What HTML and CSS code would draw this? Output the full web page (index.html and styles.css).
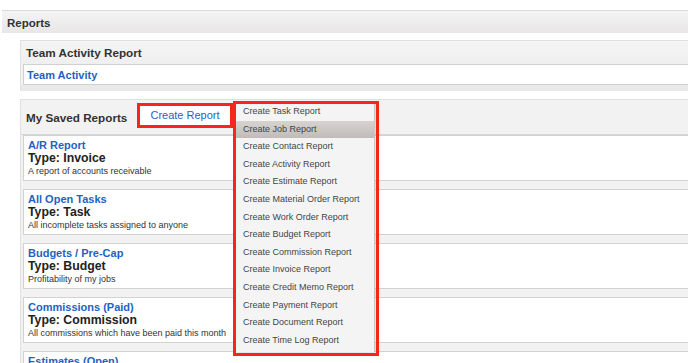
FILE: index.html
```html
<html>

  <head>

    <title>
      Reports
    </title>

    <link rel="stylesheet" href="styles.css">

  </head>

  <body>

    <div class = "page">

      <div class = "topbar">Reports</div>

      <div class = "panel">
        <div class = "panelHead">Team Activity Report</div>
        <div class = "panelBody">
          <a class = "reportLink" href = "#">Team Activity</a>
        </div>
        <div class = "panelFoot"></div>
      </div>

      <div class = "panel saved">

        <div class = "savedHead">
          <span class = "savedTitle">My Saved Reports</span>
          <a class = "createButton" href = "#">Create Report</a>
        </div>

        <div class = "card">
          <a class = "reportLink" href = "#">A/R Report</a>
          <div class = "reportType">Type: Invoice</div>
          <div class = "reportDesc">A report of accounts receivable</div>
        </div>

        <div class = "card">
          <a class = "reportLink" href = "#">All Open Tasks</a>
          <div class = "reportType">Type: Task</div>
          <div class = "reportDesc">All incomplete tasks assigned to anyone</div>
        </div>

        <div class = "card">
          <a class = "reportLink" href = "#">Budgets / Pre-Cap</a>
          <div class = "reportType">Type: Budget</div>
          <div class = "reportDesc">Profitability of my jobs</div>
        </div>

        <div class = "card">
          <a class = "reportLink" href = "#">Commissions (Paid)</a>
          <div class = "reportType">Type: Commission</div>
          <div class = "reportDesc">All commissions which have been paid this month</div>
        </div>

        <div class = "card">
          <a class = "reportLink" href = "#">Estimates (Open)</a>
          <div class = "reportType">Type: Estimate</div>
          <div class = "reportDesc">All open estimates</div>
        </div>

        <div class = "dropdown">
          <div class = "menuItem">Create Task Report</div>
          <div class = "menuItem active">Create Job Report</div>
          <div class = "menuItem">Create Contact Report</div>
          <div class = "menuItem">Create Activity Report</div>
          <div class = "menuItem">Create Estimate Report</div>
          <div class = "menuItem">Create Material Order Report</div>
          <div class = "menuItem">Create Work Order Report</div>
          <div class = "menuItem">Create Budget Report</div>
          <div class = "menuItem">Create Commission Report</div>
          <div class = "menuItem">Create Invoice Report</div>
          <div class = "menuItem">Create Credit Memo Report</div>
          <div class = "menuItem">Create Payment Report</div>
          <div class = "menuItem">Create Document Report</div>
          <div class = "menuItem">Create Time Log Report</div>
        </div>

      </div>

    </div>

  </body>

</html>
```

FILE: styles.css
```css
body
{
  margin: 0;
  overflow: hidden;
  background: #ffffff;
  font-family: "Liberation Sans", arial, sans-serif;
  color: #333333;
}

a
{
  text-decoration: none;
}

.page
{
  width: 800px;
  padding-top: 10px;
}

.topbar
{
  margin-left: 2px;
  height: 22px;
  line-height: 25px;
  padding-left: 5px;
  border-top: 1px solid #d9d9d9;
  background: linear-gradient(#f4f4f4, #e8e6e6);
  font-size: 11.5px;
  font-weight: bold;
  margin-bottom: 7px;
}

.panel
{
  margin-left: 20px;
  margin-bottom: 8px;
  border-top: 1px solid #e0e0e0;
  border-left: 1px solid #e0e0e0;
  background: #f2f2f2;
}

.panelHead
{
  height: 23px;
  line-height: 24px;
  padding-left: 5px;
  background: linear-gradient(#f4f4f4, #efefef);
  font-size: 11.7px;
  font-weight: bold;
}

.panelBody
{
  margin-left: 2px;
  height: 19px;
  line-height: 20px;
  padding-left: 3px;
  background: #ffffff;
  border: 1px solid #d0d0d0;
}

.panelFoot
{
  height: 6px;
  background: #e9e9e9;
}

.reportLink
{
  color: #1e62c4;
  font-size: 11px;
  font-weight: bold;
}

.saved
{
  position: relative;
  padding-bottom: 20px;
}

.savedHead
{
  display: flex;
  align-items: center;
  height: 34px;
  padding-left: 5px;
  border-bottom: 1px solid #d6d6d6;
}

.savedTitle
{
  font-size: 11.7px;
  font-weight: bold;
  width: 111px;
}

.createButton
{
  box-sizing: border-box;
  width: 96px;
  height: 25px;
  line-height: 19px;
  margin-top: -3px;
  text-align: center;
  background: #ffffff;
  border: 3px solid #f3281b;
  color: #2463c4;
  font-size: 11px;
}

.card
{
  margin-left: 2px;
  margin-bottom: 8px;
  height: 40px;
  padding: 3px 0 1px 4px;
  background: #ffffff;
  border: 1px solid #d2d2d2;
  line-height: 13px;
}

.card .reportLink
{
  display: block;
}

.reportType
{
  font-size: 12.3px;
  font-weight: bold;
  color: #222222;
}

.reportDesc
{
  font-size: 9px;
  color: #333333;
}

.dropdown
{
  position: absolute;
  left: 215px;
  top: 3px;
  width: 138px;
  padding-bottom: 3px;
  background: #f4f4f4;
  border-right: 1px solid #c8c8c8;
  box-shadow: 1px 1px 2px rgba(0, 0, 0, 0.15);
}

.dropdown::after
{
  content: "";
  position: absolute;
  left: -3px;
  top: -2px;
  right: -5px;
  bottom: -4px;
  border: 3px solid #f3281b;
}

.menuItem
{
  height: 17.6px;
  line-height: 17.6px;
  padding-left: 7px;
  font-size: 9px;
  color: #444444;
  white-space: nowrap;
}

.active
{
  background: linear-gradient(#d7d3d0, #c1bcb9);
}
```
